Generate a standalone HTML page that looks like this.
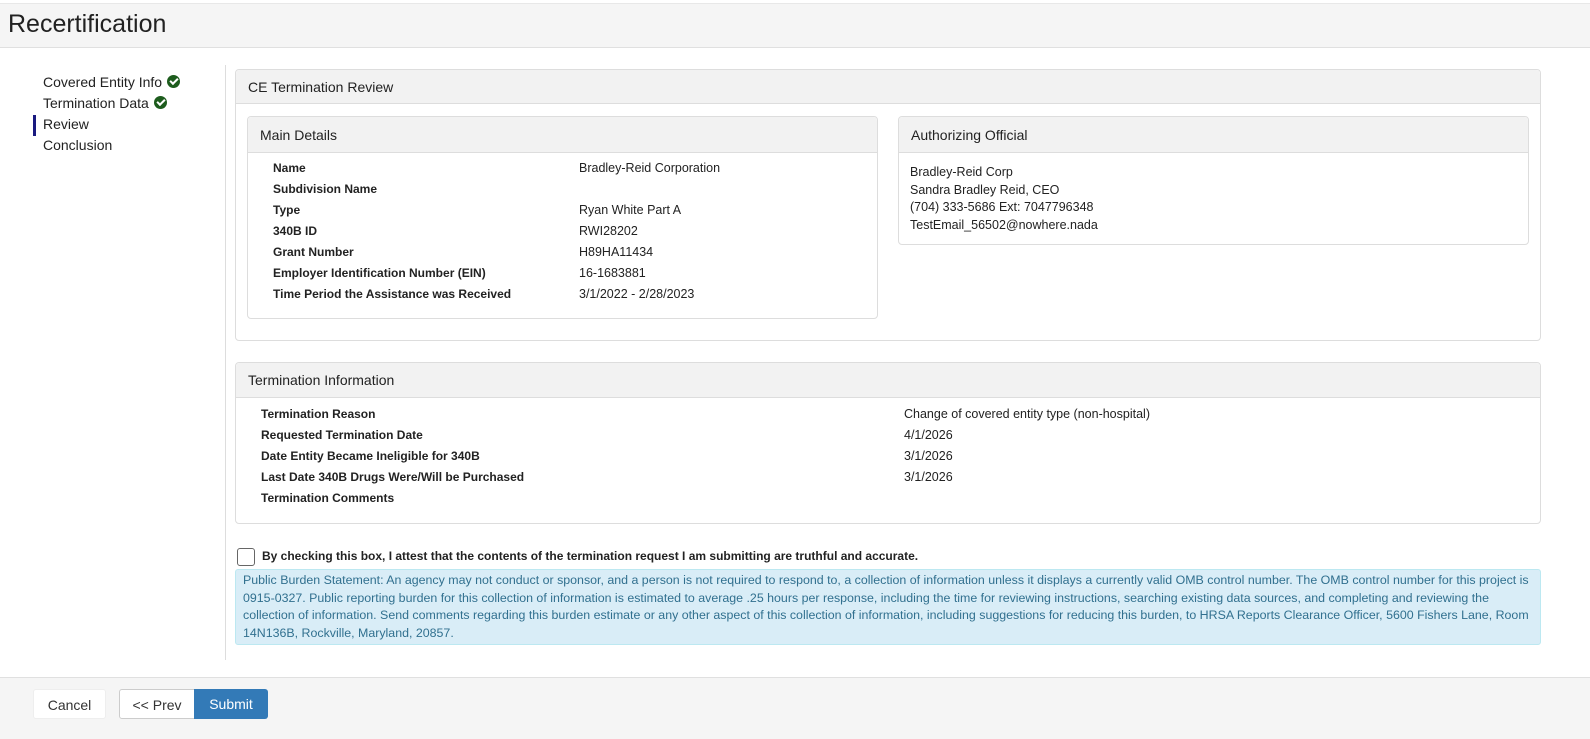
<!DOCTYPE html>
<html><head><style>
*{box-sizing:border-box;margin:0;padding:0}
body{width:1590px;height:739px;background:#fff;font-family:"Liberation Sans",sans-serif;font-size:13px;color:#222;position:relative;overflow:hidden}
.abs{position:absolute}
.hdr{left:0;top:3px;width:1590px;height:45px;background:#f5f5f5;border-bottom:1px solid #e0e0e0;border-top:1px solid #e8e8e8}
.hdr h1{font-weight:normal;font-size:25px;position:absolute;left:8px;top:6px;color:#222}
.nav div{position:absolute;left:43px;font-size:14px;color:#222}
.chk{display:inline-block;width:13px;height:13px;border-radius:50%;background:#1d5c1d;vertical-align:-1px;margin-left:5px;position:relative}
.chk:after{content:"";position:absolute;left:3px;top:3px;width:6px;height:3px;border-left:2px solid #fff;border-bottom:2px solid #fff;transform:rotate(-45deg)}
.panel{border:1px solid #ddd;border-radius:4px;background:#fff}
.ph{background:#f2f2f2;border-bottom:1px solid #ddd;font-size:14px;padding-left:12px;border-radius:4px 4px 0 0}
.row{position:absolute;font-size:12.5px}
.b{font-weight:bold;font-size:12px}
.btn{position:absolute;top:689px;height:30px;font-size:14px;text-align:center;line-height:30px;border-radius:3px}
</style></head><body>
<div class="abs hdr"><h1>Recertification</h1></div>
<div class="nav">
<div style="top:74px">Covered Entity Info<span class="chk"></span></div>
<div style="top:95px">Termination Data<span class="chk"></span></div>
<div style="top:116px">Review</div>
<div style="top:137px">Conclusion</div>
</div>
<div class="abs" style="left:33px;top:115px;width:3px;height:21px;background:#1a1a80"></div>
<div class="abs" style="left:225px;top:65px;width:1px;height:595px;background:#ddd"></div>

<div class="abs panel" style="left:235px;top:69px;width:1306px;height:272px">
<div class="ph" style="height:34px;line-height:34px">CE Termination Review</div></div>
<div class="abs panel" style="left:247px;top:116px;width:631px;height:203px">
<div class="ph" style="height:36px;line-height:36px">Main Details</div></div>
<div class="abs panel" style="left:898px;top:116px;width:631px;height:129px">
<div class="ph" style="height:36px;line-height:36px">Authorizing Official</div></div>
<div class="abs" style="left:910px;top:164px;font-size:12.5px;line-height:17.5px">Bradley-Reid Corp<br>Sandra Bradley Reid, CEO<br>(704) 333-5686 Ext: 7047796348<br>TestEmail_56502@nowhere.nada</div>

<div class="row b" style="left:273px;top:161px">Name</div><div class="row" style="left:579px;top:161px">Bradley-Reid Corporation</div>
<div class="row b" style="left:273px;top:182px">Subdivision Name</div>
<div class="row b" style="left:273px;top:203px">Type</div><div class="row" style="left:579px;top:203px">Ryan White Part A</div>
<div class="row b" style="left:273px;top:224px">340B ID</div><div class="row" style="left:579px;top:224px">RWI28202</div>
<div class="row b" style="left:273px;top:245px">Grant Number</div><div class="row" style="left:579px;top:245px">H89HA11434</div>
<div class="row b" style="left:273px;top:266px">Employer Identification Number (EIN)</div><div class="row" style="left:579px;top:266px">16-1683881</div>
<div class="row b" style="left:273px;top:287px">Time Period the Assistance was Received</div><div class="row" style="left:579px;top:287px">3/1/2022 - 2/28/2023</div>

<div class="abs panel" style="left:235px;top:362px;width:1306px;height:162px">
<div class="ph" style="height:35px;line-height:35px">Termination Information</div></div>
<div class="row b" style="left:261px;top:407px">Termination Reason</div><div class="row" style="left:904px;top:407px">Change of covered entity type (non-hospital)</div>
<div class="row b" style="left:261px;top:428px">Requested Termination Date</div><div class="row" style="left:904px;top:428px">4/1/2026</div>
<div class="row b" style="left:261px;top:449px">Date Entity Became Ineligible for 340B</div><div class="row" style="left:904px;top:449px">3/1/2026</div>
<div class="row b" style="left:261px;top:470px">Last Date 340B Drugs Were/Will be Purchased</div><div class="row" style="left:904px;top:470px">3/1/2026</div>
<div class="row b" style="left:261px;top:491px">Termination Comments</div>

<div class="abs" style="left:237px;top:548px;width:18px;height:18px;border:1.5px solid #666;border-radius:3px"></div>
<div class="row b" style="left:262px;top:549px">By checking this box, I attest that the contents of the termination request I am submitting are truthful and accurate.</div>
<div class="abs" style="left:235px;top:569px;width:1306px;height:76px;background:#d9edf7;border:1px solid #bce8f1;border-radius:3px;color:#31708f;font-size:12.4px;line-height:17.5px;padding:2px 7px">Public Burden Statement: An agency may not conduct or sponsor, and a person is not required to respond to, a collection of information unless it displays a currently valid OMB control number. The OMB control number for this project is<br>0915-0327. Public reporting burden for this collection of information is estimated to average .25 hours per response, including the time for reviewing instructions, searching existing data sources, and completing and reviewing the<br>collection of information. Send comments regarding this burden estimate or any other aspect of this collection of information, including suggestions for reducing this burden, to HRSA Reports Clearance Officer, 5600 Fishers Lane, Room<br>14N136B, Rockville, Maryland, 20857.</div>

<div class="abs" style="left:0;top:677px;width:1590px;height:62px;background:#f5f5f5;border-top:1px solid #e0e0e0"></div>
<div class="btn" style="left:33px;width:73px;background:#fff;border:1px solid #eee;color:#333">Cancel</div>
<div class="btn" style="left:119px;width:76px;background:#fff;border:1px solid #ccc;border-radius:3px 0 0 3px;color:#333">&lt;&lt; Prev</div>
<div class="btn" style="left:194px;width:74px;background:#337ab7;color:#fff;border-radius:0 3px 3px 0">Submit</div>
</body></html>
